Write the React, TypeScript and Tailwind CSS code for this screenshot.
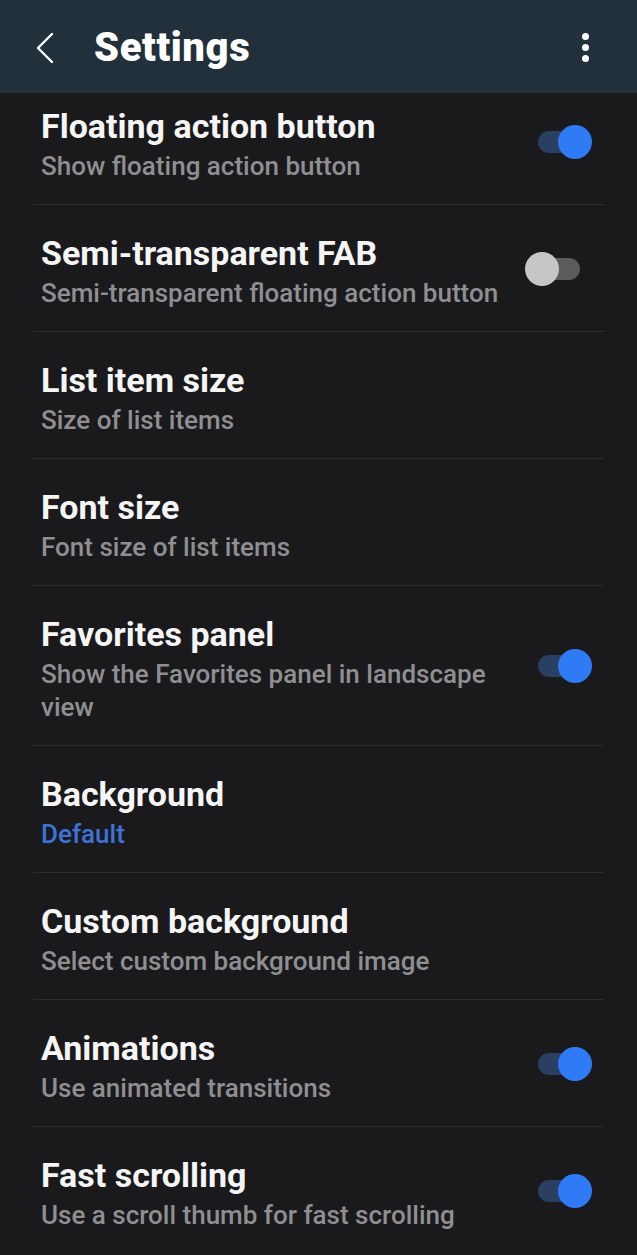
import React from "react";

type Item = {
  title: string;
  sub: string;
  subBlue?: boolean;
  toggle?: "on" | "off";
};

const items: Item[] = [
  { title: "Floating action button", sub: "Show floating action button", toggle: "on" },
  { title: "Semi-transparent FAB", sub: "Semi-transparent floating action button", toggle: "off" },
  { title: "List item size", sub: "Size of list items" },
  { title: "Font size", sub: "Font size of list items" },
  { title: "Favorites panel", sub: "Show the Favorites panel in landscape view", toggle: "on" },
  { title: "Background", sub: "Default", subBlue: true },
  { title: "Custom background", sub: "Select custom background image" },
  { title: "Animations", sub: "Use animated transitions", toggle: "on" },
  { title: "Fast scrolling", sub: "Use a scroll thumb for fast scrolling", toggle: "on" },
];

function ToggleOn() {
  return (
    <div className="relative w-[54px] h-[34px] shrink-0 mr-[12px] mt-[-6px]">
      <div className="absolute left-0 top-[6px] w-[44px] h-[22px] rounded-full bg-[#2b3f63]" />
      <div className="absolute right-0 top-0 w-[34px] h-[34px] rounded-full bg-[#2f7bf5]" />
    </div>
  );
}

function ToggleOff() {
  return (
    <div className="relative w-[55px] h-[34px] shrink-0 mr-[24px] mt-[-6px]">
      <div className="absolute right-0 top-[6px] w-[44px] h-[22px] rounded-full bg-[#5b5b5d]" />
      <div className="absolute left-0 top-0 w-[34px] h-[34px] rounded-full bg-[#c6c6c6]" />
    </div>
  );
}

export default function App() {
  return (
    <div
      className="w-[637px] h-[1255px] overflow-hidden bg-[#1a1a1c] flex flex-col"
      style={{ fontFamily: "Roboto, 'Noto Sans', sans-serif" }}
    >
      <div className="h-[93px] shrink-0 bg-[#21303b] flex items-center relative z-10">
        <svg width="20" height="32" viewBox="0 0 20 32" className="ml-[35px] mt-[2px]">
          <path d="M17 2 L3 16 L17 30" fill="none" stroke="#ffffff" strokeWidth="2.4" strokeLinecap="round" strokeLinejoin="round" />
        </svg>
        <div className="ml-[39px] text-white text-[40px] font-black tracking-[0.6px] leading-none mt-[2px]">
          Settings
        </div>
        <div className="ml-auto mr-[48px] mt-[2px] flex flex-col gap-[4px] items-center">
          <div className="w-[7px] h-[7px] rounded-full bg-white" />
          <div className="w-[7px] h-[7px] rounded-full bg-white" />
          <div className="w-[7px] h-[7px] rounded-full bg-white" />
        </div>
      </div>
      <div className="mt-[-15px] px-[33px]">
        {items.map((it, i) => (
          <div
            key={i}
            className={
              "flex items-center pl-[8px] pt-[28px] pb-[21px] " +
              (i < items.length - 1 ? "border-b border-[#2e2e31]" : "")
            }
          >
            <div className="flex-1 min-w-0 pr-[20px]">
              <div className="text-[34px] leading-[40px] font-bold text-[#f5f5f5]">
                {it.title}
              </div>
              <div
                className={
                  "mt-[4px] text-[26px] leading-[33px] font-medium " +
                  (it.subBlue ? "text-[#3d72d6]" : "text-[#8f8f91]")
                }
              >
                {it.sub}
              </div>
            </div>
            {it.toggle === "on" && <ToggleOn />}
            {it.toggle === "off" && <ToggleOff />}
          </div>
        ))}
      </div>
    </div>
  );
}
